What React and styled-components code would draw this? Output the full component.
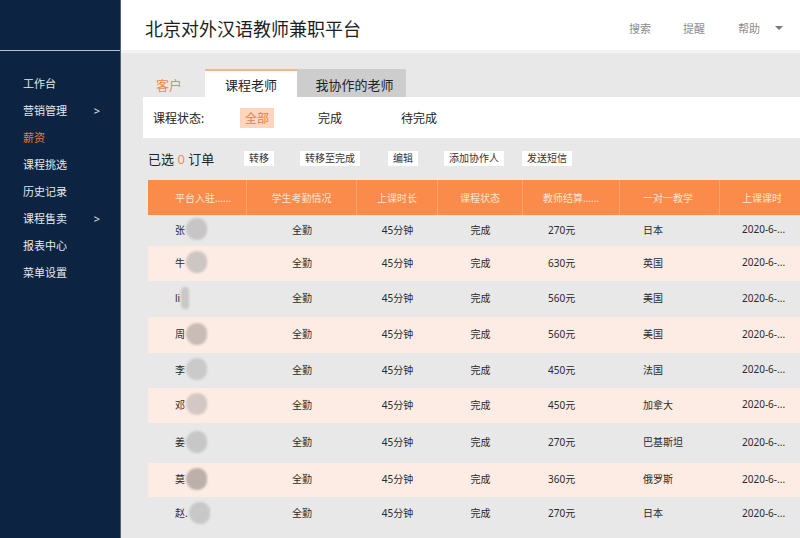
import React from "react";
import styled, { createGlobalStyle } from "styled-components";

const GlobalStyle = createGlobalStyle`
  html, body {
    margin: 0;
    padding: 0;
    height: 100%;
    overflow: hidden;
  }
  body {
    font-family: "Noto Sans", "Noto Sans CJK SC", sans-serif;
    color: #333;
  }
`;

const Layout = styled.div`
  display: flex;
  width: 800px;
  height: 538px;
  overflow: hidden;
`;

const Sidebar = styled.aside`
  width: 120px;
  flex-shrink: 0;
  background: #0c2441;
  border-right: 1px solid #50637d;
`;

const SideTop = styled.div`
  height: 50px;
  border-bottom: 1px solid #b9c0ca;
`;

const Menu = styled.ul`
  list-style: none;
  margin: 0;
  padding: 19px 20px 0 23px;
`;

const MenuItem = styled.li`
  display: flex;
  justify-content: space-between;
  height: 27px;
  line-height: 27px;
  font-size: 11px;
  color: ${(p) => (p.$active ? "#e07a3a" : "#e3e8ee")};
`;

const Main = styled.div`
  flex: 1;
  display: flex;
  flex-direction: column;
  min-width: 0;
  background: #e8e8e8;
`;

const Header = styled.header`
  height: 53px;
  box-sizing: border-box;
  flex-shrink: 0;
  display: flex;
  align-items: center;
  padding: 6px 0 0 24px;
  background: #fff;
  border-bottom: 3px solid #f3f3f3;
`;

const Title = styled.h1`
  margin: 0;
  font-size: 18px;
  font-weight: 400;
  color: #1e1e1e;
  flex: 1;
`;

const NavLink = styled.span`
  font-size: 11px;
  color: #8c8c8c;
  margin-right: ${(p) => p.$gap}px;
  display: flex;
  align-items: center;
`;

const Caret = styled.span`
  width: 0;
  height: 0;
  border-left: 4px solid transparent;
  border-right: 4px solid transparent;
  border-top: 4px solid #777;
  margin-left: 15px;
`;

const Content = styled.div`
  padding: 16px 0 0 22px;
  flex: 1;
`;

const Tabs = styled.div`
  display: flex;
  height: 28px;
`;

const Tab = styled.div`
  width: ${(p) => p.$w}px;
  display: flex;
  align-items: center;
  justify-content: center;
  padding-right: ${(p) => p.$pr || 0}px;
  padding-left: ${(p) => p.$pl || 0}px;
  font-size: 13px;
  box-sizing: border-box;
  color: ${(p) => (p.$variant === "link" ? "#ee8a4c" : "#222")};
  background: ${(p) =>
    p.$variant === "active" ? "#fff" : p.$variant === "gray" ? "#cdcdcd" : "transparent"};
  border-top: 2px solid
    ${(p) => (p.$variant === "active" ? "#f3b58e" : "transparent")};
`;

const FilterBar = styled.div`
  height: 41px;
  background: #fff;
  display: flex;
  align-items: center;
  padding-left: 10px;
  font-size: 12px;
  color: #222;
`;

const FilterLabel = styled.span`
  width: 87px;
`;

const FilterOption = styled.span`
  margin-left: ${(p) => p.$ml}px;
  padding: 1px 5px;
  color: ${(p) => (p.$active ? "#ef7d3c" : "#222")};
  background: ${(p) => (p.$active ? "#fcd5bf" : "transparent")};
`;

const Actions = styled.div`
  display: flex;
  align-items: center;
  height: 20px;
  margin: 10px 0 0 5px;
`;

const Selected = styled.span`
  font-size: 13px;
  color: #222;
  width: 96px;
`;

const Count = styled.span`
  color: #f09050;
`;

const ActionButton = styled.span`
  margin-right: ${(p) => p.$mr}px;
  height: 15px;
  line-height: 15px;
  padding: 0 5px;
  background: #fff;
  font-size: 10px;
  color: #333;
`;

const Table = styled.div`
  margin: 12px 0 0 5px;
  width: 680px;
`;

const HeadRow = styled.div`
  display: flex;
  height: 35px;
  background: #fa8b4a;
`;

const HeadCell = styled.div`
  width: ${(p) => p.$w}px;
  flex-shrink: 0;
  box-sizing: border-box;
  display: flex;
  align-items: center;
  justify-content: ${(p) => (p.$align === "left" ? "flex-start" : "center")};
  padding-left: ${(p) => (p.$align === "left" ? p.$pad : 0)}px;
  font-size: 10px;
  color: #fde3d2;
  border-right: 1px solid #fca36f;
`;

const BodyRow = styled.div`
  display: flex;
  height: ${(p) => p.$h}px;
  background: ${(p) => (p.$odd ? "#fdece3" : "#e8e8e8")};
`;

const Cell = styled.div`
  width: ${(p) => p.$w}px;
  flex-shrink: 0;
  box-sizing: border-box;
  display: flex;
  align-items: center;
  justify-content: ${(p) => (p.$align === "left" ? "flex-start" : "center")};
  padding-left: ${(p) => (p.$align === "left" ? p.$pad : 0)}px;
  padding-bottom: 3px;
  font-size: 10px;
  color: #2a2a2a;
  white-space: nowrap;
`;

const Blur = styled.span`
  display: inline-block;
  width: ${(p) => p.$w || 21}px;
  height: 22px;
  margin-left: 1px;
  border-radius: 11px 9px 9px 11px;
  background: ${(p) => p.$tone || "#c6c4c4"};
  filter: blur(1.2px);
`;

const columns = [
  { title: "平台入驻......", w: 99, hAlign: "left", hPad: 27, bAlign: "left", bPad: 27 },
  { title: "学生考勤情况", w: 110 },
  { title: "上课时长", w: 81 },
  { title: "课程状态", w: 85 },
  { title: "教师结算......", w: 97, bAlign: "left", bPad: 25 },
  { title: "一对一教学", w: 100, hAlign: "left", hPad: 23, bAlign: "left", bPad: 23 },
  { title: "上课课时", w: 108, hAlign: "left", hPad: 22, bAlign: "left", bPad: 22 },
];

const rows = [
  { name: "张", tone: "#c7c5c6", pay: "270元", country: "日本", h: 31 },
  { name: "牛", tone: "#cdc6c3", pay: "630元", country: "英国", h: 35 },
  { name: "li", tone: "#c9c7c8", pay: "560元", country: "美国", bw: 8, h: 36 },
  { name: "周", tone: "#c9bcb6", pay: "560元", country: "美国", h: 36 },
  { name: "李", tone: "#cbcaca", pay: "450元", country: "法国", h: 35 },
  { name: "邓", tone: "#d3c8c3", pay: "450元", country: "加拿大", h: 35 },
  { name: "姜", tone: "#c8c7c7", pay: "270元", country: "巴基斯坦", h: 40 },
  { name: "莫", tone: "#bcb0ab", pay: "360元", country: "俄罗斯", h: 34 },
  { name: "赵.", tone: "#c9c8c8", pay: "270元", country: "日本", h: 34 },
];

const menu = [
  { label: "工作台" },
  { label: "营销管理", arrow: true },
  { label: "薪资", active: true },
  { label: "课程挑选" },
  { label: "历史记录" },
  { label: "课程售卖", arrow: true },
  { label: "报表中心" },
  { label: "菜单设置" },
];

export default function App() {
  return (
    <>
      <GlobalStyle />
      <Layout>
        <Sidebar>
          <SideTop />
          <Menu>
            {menu.map((m) => (
              <MenuItem key={m.label} $active={m.active}>
                <span>{m.label}</span>
                {m.arrow && <span>&gt;</span>}
              </MenuItem>
            ))}
          </Menu>
        </Sidebar>
        <Main>
          <Header>
            <Title>北京对外汉语教师兼职平台</Title>
            <NavLink $gap={32}>搜索</NavLink>
            <NavLink $gap={33}>提醒</NavLink>
            <NavLink $gap={17}>
              帮助
              <Caret />
            </NavLink>
          </Header>
          <Content>
            <Tabs>
              <Tab $w={62} $pr={10} $variant="link">客户</Tab>
              <Tab $w={92} $variant="active">课程老师</Tab>
              <Tab $w={109} $pl={6} $variant="gray">我协作的老师</Tab>
            </Tabs>
            <FilterBar>
              <FilterLabel>课程状态:</FilterLabel>
              <FilterOption $ml={0} $active>全部</FilterOption>
              <FilterOption $ml={39}>完成</FilterOption>
              <FilterOption $ml={49}>待完成</FilterOption>
            </FilterBar>
            <Actions>
              <Selected>
                已选 <Count>0</Count> 订单
              </Selected>
              <ActionButton $mr={26}>转移</ActionButton>
              <ActionButton $mr={28}>转移至完成</ActionButton>
              <ActionButton $mr={26}>编辑</ActionButton>
              <ActionButton $mr={18}>添加协作人</ActionButton>
              <ActionButton $mr={0}>发送短信</ActionButton>
            </Actions>
            <Table>
              <HeadRow>
                {columns.map((c) => (
                  <HeadCell key={c.title} $w={c.w} $align={c.hAlign} $pad={c.hPad}>
                    {c.title}
                  </HeadCell>
                ))}
              </HeadRow>
              {rows.map((r, i) => {
                const values = [
                  <>
                    {r.name}
                    <Blur $tone={r.tone} $w={r.bw} />
                  </>,
                  "全勤",
                  "45分钟",
                  "完成",
                  r.pay,
                  r.country,
                  "2020-6-...",
                ];
                return (
                  <BodyRow key={i} $odd={i % 2 === 1} $h={r.h}>
                    {columns.map((c, j) => (
                      <Cell key={j} $w={c.w} $align={c.bAlign} $pad={c.bPad}>
                        {values[j]}
                      </Cell>
                    ))}
                  </BodyRow>
                );
              })}
            </Table>
          </Content>
        </Main>
      </Layout>
    </>
  );
}
